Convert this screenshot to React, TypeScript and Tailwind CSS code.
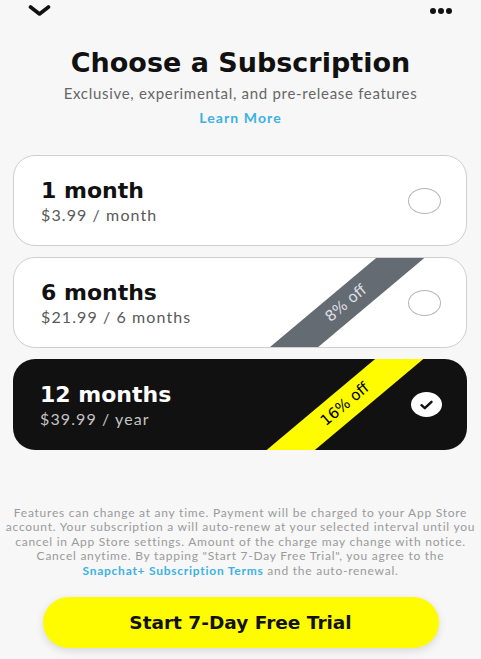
import React from "react";

type Plan = {
  title: string;
  price: string;
  badge?: string;
  selected?: boolean;
};

const plans: Plan[] = [
  { title: "1 month", price: "$3.99 / month" },
  { title: "6 months", price: "$21.99 / 6 months", badge: "8% off" },
  { title: "12 months", price: "$39.99 / year", badge: "16% off", selected: true },
];

const heavy = { fontFamily: "'DejaVu Sans', Lato, sans-serif" };

function PlanCard({ plan }: { plan: Plan }) {
  const dark = plan.selected;
  return (
    <div
      className={
        "relative flex h-[91px] items-center justify-between overflow-hidden rounded-[22px] pl-[27px] pr-[25px] " +
        (dark ? "bg-[#111111]" : "border border-[#cfcfcf] bg-white")
      }
    >
      {/* diagonal discount ribbon */}
      {plan.badge && (
        <div
          className={
            "absolute left-[232px] top-[30px] flex h-[31px] w-[200px] -rotate-[40deg] items-center justify-center text-[15px] " +
            (dark ? "bg-[#fffc00] text-black" : "bg-[#646b73] text-[#dcdfe2]")
          }
          style={heavy}
        >
          {plan.badge}
        </div>
      )}

      <div className="relative flex flex-col">
        <span
          className={"text-[22px] leading-[26px] font-bold " + (dark ? "text-white" : "text-[#111]")}
          style={heavy}
        >
          {plan.title}
        </span>
        <span
          className={
            "mt-[2px] text-[16px] leading-[18px] tracking-[1.1px] " +
            (dark ? "text-[#c4c4c4]" : "text-[#595959]")
          }
        >
          {plan.price}
        </span>
      </div>

      {dark ? (
        <div className="relative flex h-[25px] w-[31px] items-center justify-center rounded-[50%] bg-white">
          <svg width="13" height="10" viewBox="0 0 13 10" fill="none">
            <path d="M1.5 5.2 4.8 8.2 11.5 1.8" stroke="#111" strokeWidth="2.4" strokeLinecap="round" strokeLinejoin="round" />
          </svg>
        </div>
      ) : (
        <div className="relative h-[26px] w-[33px] rounded-[50%] border border-[#b5b5b5] bg-white" />
      )}
    </div>
  );
}

export default function App() {
  return (
    <div
      className="flex h-[659px] w-[481px] flex-col overflow-hidden bg-[#f7f7f7]"
      style={{ fontFamily: "Lato, 'Noto Sans', sans-serif" }}
    >
      {/* Top bar */}
      <div className="flex items-start justify-between pl-[28px] pr-[29px] pt-[5px]">
        <svg width="23" height="11" viewBox="0 0 23 11" fill="none">
          <path d="M2.5 2 11.5 9 20.5 2" stroke="#111" strokeWidth="3.6" strokeLinecap="round" strokeLinejoin="round" />
        </svg>
        <div className="mt-[3px] flex gap-[2px]">
          <span className="h-[6px] w-[6px] rounded-full bg-[#111]" />
          <span className="h-[6px] w-[6px] rounded-full bg-[#111]" />
          <span className="h-[6px] w-[6px] rounded-full bg-[#111]" />
        </div>
      </div>

      {/* Heading */}
      <div className="mt-[30px] flex flex-col items-center">
        <h1 className="text-[27px] leading-[34px] font-bold text-[#111]" style={heavy}>
          Choose a Subscription
        </h1>
        <p className="mt-[4px] text-[15px] leading-[18px] tracking-[0.7px] text-[#666]">
          Exclusive, experimental, and pre-release features
        </p>
        <a className="mt-[7px] text-[14px] leading-[18px] font-bold tracking-[1.1px] text-[#3cb1e4]">
          Learn More
        </a>
      </div>

      {/* Plans */}
      <div className="mt-[28px] flex flex-col gap-[11px] pl-[13px] pr-[14px]">
        {plans.map((p) => (
          <PlanCard key={p.title} plan={p} />
        ))}
      </div>

      {/* Legal */}
      <p className="mt-[56px] whitespace-nowrap text-center text-[12px] leading-[14.4px] tracking-[0.75px] text-[#9a9a9a]">
        Features can change at any time. Payment will be charged to your App Store
        <br />
        account. Your subscription a will auto-renew at your selected interval until you
        <br />
        cancel in App Store settings. Amount of the charge may change with notice.
        <br />
        Cancel anytime. By tapping "Start 7-Day Free Trial", you agree to the
        <br />
        <span className="font-bold text-[#3cb1e4]">Snapchat+ Subscription Terms</span> and the auto-renewal.
      </p>

      {/* CTA */}
      <div className="mt-[19px] flex justify-center">
        <button
          className="h-[51px] w-[396px] rounded-full bg-[#fffc00] text-[18.5px] font-bold text-[#111] shadow-[0_3px_8px_rgba(0,0,0,0.12)]"
          style={heavy}
        >
          Start 7-Day Free Trial
        </button>
      </div>
    </div>
  );
}
